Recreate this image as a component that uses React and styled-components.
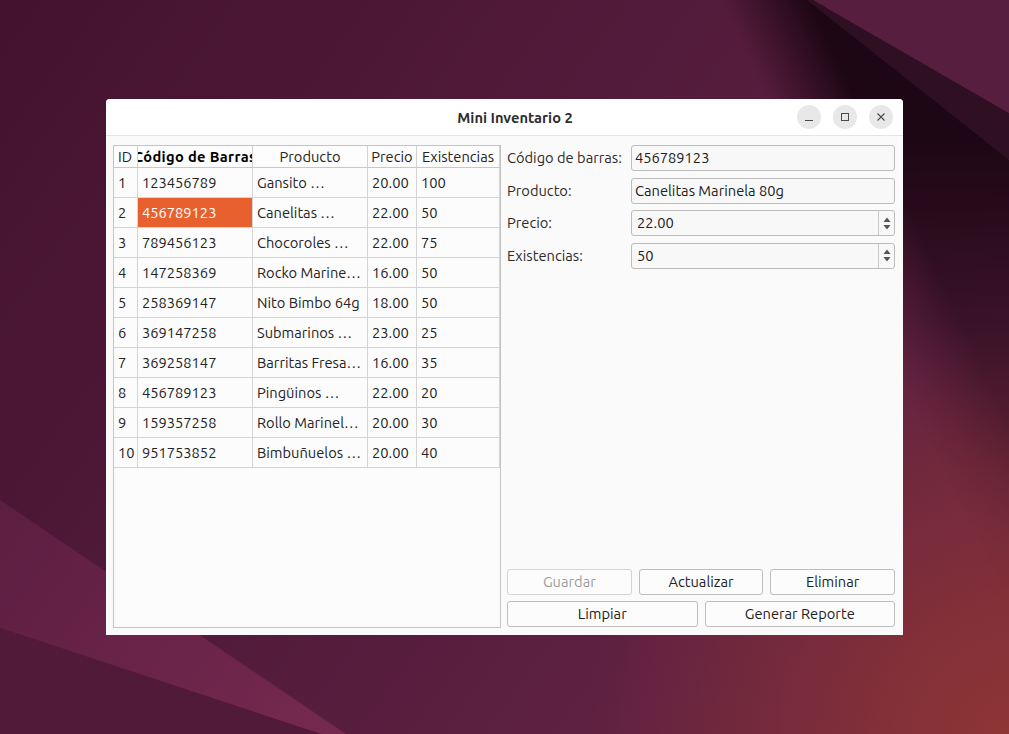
import React from 'react';
import styled, { createGlobalStyle } from 'styled-components';

const Global = createGlobalStyle`
  html, body { margin: 0; padding: 0; }
  body {
    width: 1009px; height: 734px; overflow: hidden;
    font-family: "Ubuntu", "Noto Sans", "DejaVu Sans", sans-serif;
    font-size: 14.67px; color: #232323;
  }
`;

const Desktop = styled.div`
  position: relative;
  width: 1009px;
  height: 734px;
  overflow: hidden;
  padding: 99px 0 0 106px;
  box-sizing: border-box;
  background: #4d1836;
`;

const Wallpaper = styled.svg`
  position: absolute;
  left: 0; top: 0;
  width: 1009px; height: 734px;
  z-index: 0;
`;

const Window = styled.div`
  position: relative;
  z-index: 1;
  width: 797px;
  height: 536px;
  background: #fafafa;
  border-radius: 4px 4px 0 0;
  display: flex;
  flex-direction: column;
  overflow: hidden;
`;

const TitleBar = styled.div`
  height: 36px;
  flex: none;
  background: #ffffff;
  border-bottom: 1px solid #e4e4e4;
  display: grid;
  grid-template-columns: 1fr auto 1fr;
  align-items: center;
  padding-left: 21px;
`;

const Title = styled.div`
  grid-column: 2;
  font-weight: 700;
  font-size: 14.67px;
  color: #2e2e2e;
`;

const Controls = styled.div`
  grid-column: 3;
  justify-self: end;
  display: flex;
  gap: 12px;
  margin-right: 10px;
`;

const CtrlBtn = styled.div`
  width: 24px; height: 24px;
  border-radius: 50%;
  background: #e8e8e8;
  display: flex; align-items: center; justify-content: center;
  color: #4a4a4a;
`;

const Body = styled.div`
  flex: 1;
  display: grid;
  grid-template-columns: 388px 388px;
  gap: 6px;
  padding: 9px 8px 7px 7px;
  min-height: 0;
`;

const TableFrame = styled.div`
  border: 1px solid #c4c4c4;
  background: #fcfcfc;
  overflow: hidden;
`;

const cols = '24px 115px 115px 49px 83px';

const HeaderRow = styled.div`
  display: grid;
  grid-template-columns: ${cols};
  height: 22px;
`;

const HeaderCell = styled.div`
  border-right: 1px solid #d2d2d2;
  border-bottom: 1px solid #c8c8c8;
  display: flex;
  align-items: center;
  justify-content: ${p => (p.$left ? 'flex-start' : 'center')};
  padding-left: ${p => (p.$left ? '4px' : '0')};
  white-space: nowrap;
  overflow: hidden;
  font-weight: ${p => (p.$bold ? 700 : 400)};
  letter-spacing: ${p => (p.$bold ? '0.35px' : '0')};
  color: ${p => (p.$bold ? '#000' : '#232323')};
  background: #fdfdfd;
`;

const Row = styled.div`
  display: grid;
  grid-template-columns: ${cols};
  height: 30px;
`;

const Cell = styled.div`
  border-right: 1px solid #d4d4d4;
  border-bottom: 1px solid #d4d4d4;
  display: flex;
  align-items: center;
  padding-left: 4px;
  padding-bottom: 1px;
  white-space: nowrap;
  overflow: hidden;
  background: ${p => (p.$selected ? '#e9602f' : 'transparent')};
  color: ${p => (p.$selected ? '#ffffff' : '#232323')};
`;

const Panel = styled.div`
  display: flex;
  flex-direction: column;
  justify-content: space-between;
  padding-bottom: 1px;
`;

const Form = styled.div`
  display: grid;
  grid-template-columns: 124px 1fr;
  row-gap: 6.6px;
  align-items: center;
`;

const Label = styled.div`
  color: #2b2b2b;
  white-space: nowrap;
  padding-bottom: 1px;
`;

const Field = styled.div`
  height: 26px;
  box-sizing: border-box;
  border: 1px solid #bcbcbc;
  border-radius: 3px;
  background: #f8f8f8;
  display: flex;
  align-items: center;
  padding-left: ${p => (p.$spin ? '5px' : '3px')};
  color: #202020;
`;

const FieldText = styled.div`
  flex: 1;
  padding-bottom: 1px;
`;

const Spin = styled.div`
  width: 15px;
  align-self: stretch;
  border-left: 1px solid #c8c8c8;
  display: flex;
  flex-direction: column;
  align-items: center;
  justify-content: center;
  gap: 3px;
`;

const Buttons = styled.div`
  display: flex;
  flex-direction: column;
  gap: 6px;
`;

const BtnRow = styled.div`
  display: grid;
  grid-template-columns: repeat(${p => p.$n}, 1fr);
  gap: 7px;
`;

const Button = styled.div`
  height: 26px;
  box-sizing: border-box;
  border: 1px solid ${p => (p.$disabled ? '#d4d4d4' : '#bdbdbd')};
  border-radius: 3px;
  background: #fcfcfc;
  display: flex;
  align-items: center;
  justify-content: center;
  padding-bottom: 1px;
  color: ${p => (p.$disabled ? '#9c9c9c' : '#222')};
`;

const rows = [
  [1, '123456789', 'Gansito …', '20.00', '100'],
  [2, '456789123', 'Canelitas …', '22.00', '50'],
  [3, '789456123', 'Chocoroles …', '22.00', '75'],
  [4, '147258369', 'Rocko Marine…', '16.00', '50'],
  [5, '258369147', 'Nito Bimbo 64g', '18.00', '50'],
  [6, '369147258', 'Submarinos …', '23.00', '25'],
  [7, '369258147', 'Barritas Fresa…', '16.00', '35'],
  [8, '456789123', 'Pingüinos …', '22.00', '20'],
  [9, '159357258', 'Rollo Marinel…', '20.00', '30'],
  [10, '951753852', 'Bimbuñuelos …', '20.00', '40'],
];

const SpinArrows = () => (
  <Spin>
    <svg width="8" height="5" viewBox="0 0 8 5"><path d="M0.5 5 L4 0.5 L7.5 5 Z" fill="#555" /></svg>
    <svg width="8" height="5" viewBox="0 0 8 5"><path d="M0.5 0 L7.5 0 L4 4.5 Z" fill="#555" /></svg>
  </Spin>
);

const Background = () => (
  <Wallpaper viewBox="0 0 1009 734">
    <defs>
      <linearGradient id="base" x1="0" y1="0" x2="1009" y2="734" gradientUnits="userSpaceOnUse">
        <stop offset="0" stopColor="#43122e" />
        <stop offset="0.45" stopColor="#531b3b" />
        <stop offset="0.75" stopColor="#5f2142" />
        <stop offset="1" stopColor="#6a2540" />
      </linearGradient>
      <radialGradient id="red" cx="1009" cy="734" r="420" gradientUnits="userSpaceOnUse">
        <stop offset="0" stopColor="#8e3535" stopOpacity="1" />
        <stop offset="1" stopColor="#8e3535" stopOpacity="0" />
      </radialGradient>
      <linearGradient id="shadowEdge" x1="777" y1="117" x2="849" y2="83" gradientUnits="userSpaceOnUse">
        <stop offset="0" stopColor="#1a0611" stopOpacity="0" />
        <stop offset="1" stopColor="#1a0611" stopOpacity="0.95" />
      </linearGradient>
      <linearGradient id="fadeV" x1="0" y1="140" x2="0" y2="600" gradientUnits="userSpaceOnUse">
        <stop offset="0" stopColor="#fff" stopOpacity="1" />
        <stop offset="0.74" stopColor="#fff" stopOpacity="0.2" />
        <stop offset="1" stopColor="#fff" stopOpacity="0" />
      </linearGradient>
      <mask id="shadowMask" maskUnits="userSpaceOnUse" x="0" y="0" width="1009" height="734">
        <rect x="0" y="0" width="1009" height="734" fill="url(#fadeV)" />
      </mask>
      <linearGradient id="band" x1="0" y1="500" x2="330" y2="734" gradientUnits="userSpaceOnUse">
        <stop offset="0" stopColor="#5c1e42" />
        <stop offset="1" stopColor="#76294f" />
      </linearGradient>
    </defs>
    <rect width="1009" height="734" fill="url(#base)" />
    <rect width="1009" height="734" fill="url(#red)" />
    <polygon points="600,0 817,0 1009,160 1009,734 600,734" fill="url(#shadowEdge)" mask="url(#shadowMask)" />
    <polygon points="807,0 813,0 1009,113 1009,160" fill="#2f0f22" />
    <polygon points="813,0 1009,0 1009,113" fill="#571e3f" />
    <polygon points="0,500 346,734 321,734 0,628" fill="url(#band)" />
    <polygon points="0,628 321,734 0,734" fill="#511a38" />
  </Wallpaper>
);

export default function App() {
  return (
    <>
      <Global />
      <Desktop>
        <Background />
        <Window>
          <TitleBar>
            <Title>Mini Inventario 2</Title>
            <Controls>
              <CtrlBtn>
                <svg width="10" height="10" viewBox="0 0 10 10"><path d="M1 8.5 H9" stroke="#4a4a4a" strokeWidth="1" /></svg>
              </CtrlBtn>
              <CtrlBtn>
                <svg width="10" height="10" viewBox="0 0 10 10"><rect x="1.5" y="1.5" width="7" height="7" fill="none" stroke="#4a4a4a" strokeWidth="1" /></svg>
              </CtrlBtn>
              <CtrlBtn>
                <svg width="10" height="10" viewBox="0 0 10 10"><path d="M1.5 1.5 L8.5 8.5 M8.5 1.5 L1.5 8.5" stroke="#4a4a4a" strokeWidth="1.1" /></svg>
              </CtrlBtn>
            </Controls>
          </TitleBar>
          <Body>
            <TableFrame>
              <HeaderRow>
                <HeaderCell $left>ID</HeaderCell>
                <HeaderCell $bold>Código de Barras</HeaderCell>
                <HeaderCell>Producto</HeaderCell>
                <HeaderCell>Precio</HeaderCell>
                <HeaderCell>Existencias</HeaderCell>
              </HeaderRow>
              {rows.map(r => (
                <Row key={r[0]}>
                  <Cell>{r[0]}</Cell>
                  <Cell $selected={r[0] === 2}>{r[1]}</Cell>
                  <Cell>{r[2]}</Cell>
                  <Cell>{r[3]}</Cell>
                  <Cell>{r[4]}</Cell>
                </Row>
              ))}
            </TableFrame>
            <Panel>
              <Form>
                <Label>Código de barras:</Label>
                <Field><FieldText>456789123</FieldText></Field>
                <Label>Producto:</Label>
                <Field><FieldText>Canelitas Marinela 80g</FieldText></Field>
                <Label>Precio:</Label>
                <Field $spin><FieldText>22.00</FieldText><SpinArrows /></Field>
                <Label>Existencias:</Label>
                <Field $spin><FieldText>50</FieldText><SpinArrows /></Field>
              </Form>
              <Buttons>
                <BtnRow $n={3}>
                  <Button $disabled>Guardar</Button>
                  <Button>Actualizar</Button>
                  <Button>Eliminar</Button>
                </BtnRow>
                <BtnRow $n={2}>
                  <Button>Limpiar</Button>
                  <Button>Generar Reporte</Button>
                </BtnRow>
              </Buttons>
            </Panel>
          </Body>
        </Window>
      </Desktop>
    </>
  );
}
